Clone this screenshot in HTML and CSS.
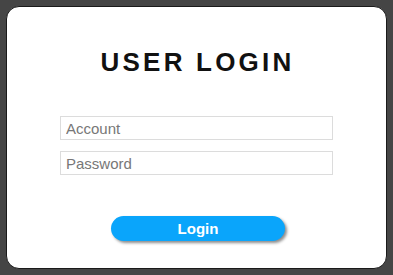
FILE: index.html
```html
<!DOCTYPE html>
<html>
<head>
<meta charset="utf-8">
<link rel="stylesheet" href="styles.css">
</head>
<body>
<div class="page">
  <div class="card">
    <h1 class="title">USER LOGIN</h1>
    <div class="fields">
      <input class="field" type="text" placeholder="Account">
      <input class="field" type="password" placeholder="Password">
    </div>
    <button class="login-btn">Login</button>
  </div>
</div>
</body>
</html>
```
FILE: styles.css
```css
html, body {
  margin: 0;
  padding: 0;
  background: #454545;
  font-family: "Liberation Sans", Arial, sans-serif;
}
.page {
  width: 393px;
  height: 275px;
  box-sizing: border-box;
  padding: 6px 6px 6px 6px;
}
.card {
  box-sizing: border-box;
  width: 381px;
  height: 263px;
  background: #fff;
  border: 1px solid #1a1a1a;
  border-radius: 13px;
  display: flex;
  flex-direction: column;
  align-items: center;
  padding-top: 40px;
}
.title {
  margin: 0;
  font-size: 26px;
  font-weight: bold;
  letter-spacing: 3.2px;
  line-height: 30px;
  color: #111;
  padding-left: 2px;
}
.fields {
  margin-top: 39px;
  display: flex;
  flex-direction: column;
  gap: 11px;
}
.field {
  box-sizing: border-box;
  width: 273px;
  height: 24px;
  margin: 0;
  border: 1px solid #dcdcdc;
  padding: 0 5px;
  font-family: "Liberation Sans", Arial, sans-serif;
  font-size: 15px;
  color: #333;
  outline: none;
}
.field::placeholder {
  color: #777;
}
.login-btn {
  margin-top: 41px;
  width: 174px;
  height: 25px;
  border: none;
  border-radius: 13px;
  background: #0aa5fb;
  color: #fff;
  font-family: "Liberation Sans", Arial, sans-serif;
  font-size: 15px;
  font-weight: bold;
  box-shadow: 2px 2px 3px rgba(0,0,0,0.45);
  padding: 0;
  margin-left: 3px;
}
```
